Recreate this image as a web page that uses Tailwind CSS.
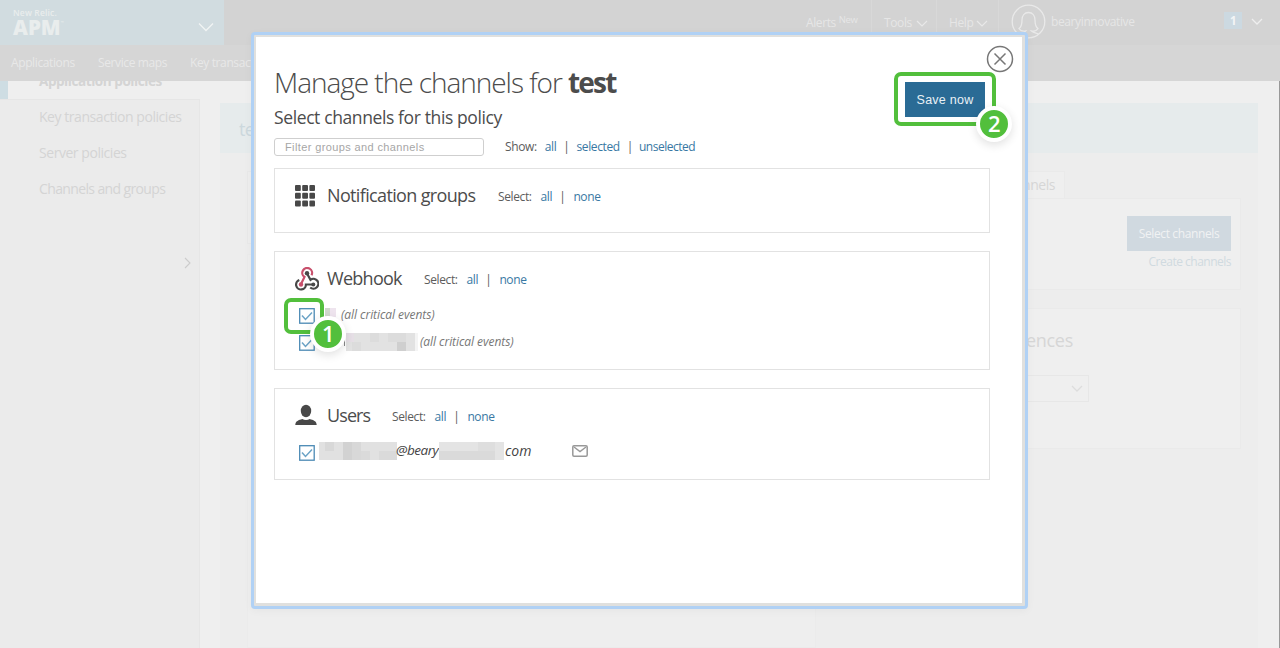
<!DOCTYPE html>
<html lang="en">
<head>
<meta charset="utf-8">
<title>Manage channels</title>
<script src="https://cdn.jsdelivr.net/npm/@tailwindcss/browser@4"></script>
</head>
<body class="overflow-hidden bg-[#efefef]">
<div class="relative flex h-[648px] w-[1280px] flex-col overflow-hidden bg-[#efefef] font-['Open_Sans',sans-serif] **:tracking-[-0.032em]">
  <!-- Top bar -->
  <header class="flex h-[45px] shrink-0 bg-[#d3d3d3] text-[#e6e6e6]">
    <div class="flex w-[224px] justify-between bg-[#d1dce0] pl-[13px] pr-[10px]">
      <div class="pt-[8px] text-[#e9eded]">
        <div class="text-[8.5px] leading-[10px] font-semibold tracking-[0.02em]!">New Relic.</div>
        <div class="flex text-[20.5px] leading-[19px] font-extrabold tracking-[0em]!">APM<span class="pt-[2px] text-[4px] leading-[5px] font-normal">™</span></div>
      </div>
      <svg class="mt-[22px] h-[10px] w-[16px]" viewBox="0 0 16 10" fill="none" stroke="#f1f4f4" stroke-width="1.3"><path d="M1 1.5l7 7 7-7"/></svg>
    </div>
    <div class="flex flex-1 text-[13px] leading-[18px]">
      <div class="ml-[582px] w-[65px] pt-[14px] text-[12px] whitespace-nowrap">Alerts <span class="relative -top-[4px] text-[9.500px]">New</span></div>
      <div class="flex w-[65px] gap-[4px] border-l border-[#d8d8d8] pl-[12px] pt-[14px] text-[12px]">Tools<svg class="mt-[6px] h-[8px] w-[12px]" viewBox="0 0 12 8" fill="none" stroke="#e8e8e8" stroke-width="1.2"><path d="M1 1l5 5 5-5"/></svg></div>
      <div class="flex w-[62px] gap-[3px] border-l border-[#d8d8d8] pl-[12px] pt-[14px] text-[12px]">Help<svg class="mt-[6px] h-[8px] w-[12px]" viewBox="0 0 12 8" fill="none" stroke="#e8e8e8" stroke-width="1.2"><path d="M1 1l5 5 5-5"/></svg></div>
      <div class="flex border-l border-[#d8d8d8] pl-[12px]">
        <svg class="mt-[4px] h-[36px] w-[36px]" viewBox="0 0 36 36" fill="none" stroke="#e9e9e9" stroke-width="1.3"><circle cx="17.5" cy="17.5" r="16.3"/><path d="M14 32c-2-1-1.500-3 .5-5-2.500.5-5 0-6.500-2.500 3-2 3-5 3-8.500 0-4.500 2.500-7.500 6.500-7.500s6.500 3 6.500 7.500c0 3.500 0 6.500 3 8.500-1.500 2.500-4 3-6.500 2.500 1.500 1.500 4 2 7 3"/></svg>
        <span class="ml-[4px] pt-[13px] text-[12px]">bearyinnovative</span>
      </div>
    </div>
    <div class="flex w-[56px] pt-[12px]">
      <div class="h-[17px] w-[18px] bg-[#ccd9e1] text-center text-[11.500px] leading-[18px] font-bold text-[#f3f5f6]">1</div>
      <svg class="mt-[6px] ml-[9px] h-[8px] w-[12px]" viewBox="0 0 12 8" fill="none" stroke="#eee" stroke-width="1.3"><path d="M1 1l5 5 5-5"/></svg>
    </div>
  </header>
  <nav class="flex h-[36px] shrink-0 bg-[#d6d6d6] pl-[11px] pt-[9px] text-[12px] leading-[18px] text-[#e8e8e8]">
    <span class="w-[87px]">Applications</span><span class="w-[92px]">Service maps</span><span>Key transactions</span>
  </nav>
  <!-- Page behind the dialog -->
  <div class="flex flex-1 overflow-hidden border-r border-[#999]">
    <aside class="flex w-[200px] flex-col text-[14px] leading-[18px] text-[#d4d4d4]">
      <div class="flex h-[18px] overflow-hidden"><div class="w-[8px] bg-[#cedde3]"></div><div class="-mt-[9px] pl-[31px] text-[13.500px] font-bold">Application policies</div></div>
      <div class="relative flex-1 border-t border-r border-[#e6e6e6] bg-[#ebebeb] pl-[39px] pt-[8px]">
        <div class="h-[36px]">Key transaction policies</div>
        <div class="h-[36px]">Server policies</div>
        <div class="h-[36px] tracking-[-0.045em]!">Channels and groups</div>
        <svg class="ml-[145px] mt-[41px] h-[12px] w-[7px]" viewBox="0 0 7 12" fill="none" stroke="#ccc" stroke-width="1.100"><path d="M1 1l5 5-5 5"/></svg>
      </div>
    </aside>
    <main class="mt-[22px] ml-[20px] flex w-[1038px] flex-col bg-[#ededed]">
      <div class="h-[50px] bg-[#e6ebec] pl-[19px] pt-[15px] text-[18px] leading-[22px] text-[#ccd8dd]">test</div>
      <div class="flex flex-1">
        <section class="mt-[18px] ml-[27px] flex w-[569px] flex-col">
          <div class="h-[73px] border border-[#e9e9e9] bg-[#eeeeee]"></div>
          <div class="mt-[10px] flex-1 border border-[#ebebeb] bg-[#eeeeee]"></div>
        </section>
        <section class="mt-[18px] w-[425px] text-right">
          <div class="-mb-px h-[28px] w-[249px] border border-b-0 border-[#eaeaea] bg-[#efefef] pr-[9px] text-[14px] leading-[26px] text-[#d6d6d6]">Channels</div>
          <div class="flex h-[92px] flex-col items-end border border-[#eaeaea] bg-[#efefef] pr-[9px] pt-[17px]">
            <div class="h-[35px] w-[104px] bg-[#d0d9e0] text-center text-[12px] leading-[35px] text-[#f0f2f3]">Select channels</div>
            <div class="pt-[2px] text-[12px] leading-[18px] tracking-[-0.042em]! text-[#d0dae0]">Create channels</div>
          </div>
          <div class="mt-[18px] h-[141px] border border-[#eaeaea] bg-[#efefef]">
            <div class="mt-[19px] w-[256px] text-[18px] leading-[24px] tracking-[-0.015em]! text-[#d6d6d6]">Preferences</div>
            <div class="mt-[23px] flex h-[27px] w-[272px] items-center justify-end border border-[#e7e7e7] pr-[5px]"><svg class="h-[8px] w-[12px]" viewBox="0 0 12 8" fill="none" stroke="#ddd" stroke-width="1.3"><path d="M1 1l5 5 5-5"/></svg></div>
          </div>
        </section>
      </div>
    </main>
  </div>

  <!-- Dialog -->
  <div class="absolute top-[31.500px] left-[250.500px] flex h-[577px] w-[777px] flex-col rounded-[4px] border-[3px] border-[#b0d1f5] bg-[#e0e0de] p-[2.500px] shadow-[0_2px_8px_rgba(0,0,0,0.04)]">
    <div class="relative flex flex-1 flex-col bg-white pl-[18px] text-[#4c4c4c]">
      <h1 class="mt-[26px] text-[28px] leading-[38px] font-light whitespace-nowrap tracking-[-0.037em]!">Manage the channels for <b class="font-bold tracking-[-0.065em]!">test</b></h1>
      <h2 class="mt-[4px] text-[17.500px] leading-[24px] tracking-[-0.022em]!">Select channels for this policy</h2>
      <div class="mt-[8px] flex h-[19px] items-center text-[12px]">
        <div class="h-[18px] w-[210px] rounded-[3px] border border-[#cfcfcf] pl-[10px] font-['Liberation_Sans',sans-serif] text-[11px] leading-[17px] tracking-[0.380px]! text-[#a6a6a6]">Filter groups and channels</div>
        <div class="mt-px ml-[21px] flex text-[#5c5c5c]"><span>Show:</span><span class="ml-[8px] text-[#3878a3]">all</span><span class="mx-[7px]">|</span><span class="text-[#3878a3]">selected</span><span class="mr-[6px] ml-[7px]">|</span><span class="tracking-[-0.042em]! text-[#3878a3]">unselected</span></div>
      </div>

      <section class="mt-[12px] h-[65px] w-[716px] border border-[#e2e2e2] pl-[20px] pt-[14px]">
        <div class="flex h-[24px] items-center text-[12px] text-[#5c5c5c]">
          <svg class="mt-px h-[23px] w-[20px]" viewBox="0 0 20 23" fill="#484848"><rect x="0" y="1" width="5.800" height="6" rx="1"/><rect x="7.200" y="1" width="5.800" height="6" rx="1"/><rect x="14.400" y="1" width="5.600" height="6" rx="1"/><rect x="0" y="8.800" width="5.800" height="6" rx="1"/><rect x="7.200" y="8.800" width="5.800" height="6" rx="1"/><rect x="14.400" y="8.800" width="5.600" height="6" rx="1"/><rect x="0" y="16.600" width="5.800" height="6" rx="1"/><rect x="7.200" y="16.600" width="5.800" height="6" rx="1"/><rect x="14.400" y="16.600" width="5.600" height="6" rx="1"/></svg>
          <span class="ml-[12px] w-[171px] text-[18px] tracking-[-0.036em]! text-[#4c4c4c]">Notification groups</span>
          <div class="flex pt-[3px]"><span>Select:</span><span class="ml-[9px] text-[#3878a3]">all</span><span class="mr-[8px] ml-[7px]">|</span><span class="text-[#3878a3]">none</span></div>
        </div>
      </section>

      <section class="mt-[18px] h-[119px] w-[716px] border border-[#e2e2e2] pl-[20px] pt-[14px]">
        <div class="flex h-[24px] items-center text-[12px] text-[#5c5c5c]">
          <svg class="mt-[2px] h-[24px] w-[24px]" viewBox="0 0 24 24" fill="none" stroke-width="2.200"><path stroke="#c8506c" d="M16.500 8.200A4.900 4.900 0 1 0 9.500 10L6.300 16.500"/><path stroke="#484848" d="M12 6.500l3.500 6.300a4.900 4.900 0 1 1-.3 7.700"/><path stroke="#484848" d="M4.300 13a4.900 4.900 0 1 0 6.600 4.500h7.500"/><circle cx="12" cy="6.300" r="2.200" fill="#484848"/><circle cx="6" cy="17.500" r="2.200" fill="#c8506c"/><circle cx="18.300" cy="17.500" r="2" fill="#484848"/></svg>
          <span class="ml-[8px] w-[97px] text-[18px] tracking-[-0.040em]! text-[#4c4c4c]">Webhook</span>
          <div class="flex pt-[3px]"><span>Select:</span><span class="ml-[9px] text-[#3878a3]">all</span><span class="mr-[8px] ml-[7px]">|</span><span class="text-[#3878a3]">none</span></div>
        </div>
        <div class="mt-[11px] flex h-[27px] items-center pl-[4px] text-[12px] text-[#777] italic">
          <svg class="mt-[3px] h-[16px] w-[16px]" viewBox="0 0 16 16" fill="none" stroke="#4a89b4"><rect x=".7" y=".7" width="14.500" height="14.500" stroke-width="1.300"/><path d="M3 7.500l3.500 4 6.500-7" stroke="#6ba3c6" stroke-width="1.500"/></svg>
          <svg class="-mt-[3px] ml-[9px] h-[13px] w-[14px]" viewBox="0 0 14 13"><path fill="#d0d8cd" d="M1 1h5v9H1z"/><path fill="#eee4ee" d="M6 1h6v9H6z"/></svg>
          <span class="ml-[3px] tracking-[-0.005em]!">(all critical events)</span>
        </div>
        <div class="flex h-[27px] items-center pl-[4px] text-[12px] text-[#777] italic">
          <svg class="mt-[3px] h-[16px] w-[16px]" viewBox="0 0 16 16" fill="none" stroke="#4a89b4"><rect x=".7" y=".7" width="14.500" height="14.500" stroke-width="1.300"/><path d="M3 7.500l3.500 4 6.500-7" stroke="#6ba3c6" stroke-width="1.500"/></svg>
          <svg class="ml-[29px] h-[18px] w-[74px]" viewBox="0 0 74 18"><path stroke="#888" d="M.5 6v7"/><path fill="#e2e2e2" d="M2 0h69v18H2z"/><path fill="#e6dfe6" d="M2 0h8v9H2z"/><path fill="#dcdcdc" d="M8 9h9v9H8zM26 0h9v9h-9zM44 0h9v9h-9z"/><path fill="#dcdcdc" d="M53 0h9v9h-9z"/><path fill="#cfcfcf" d="M53 9h9v9h-9z"/><path fill="#f4f4f4" d="M71 0h3v18h-3z"/></svg>
          <span class="ml-[2px] tracking-[-0.005em]!">(all critical events)</span>
        </div>
      </section>

      <section class="mt-[18px] h-[92px] w-[716px] border border-[#e2e2e2] pl-[20px] pt-[14px]">
        <div class="flex h-[24px] items-center text-[12px] text-[#5c5c5c]">
          <svg class="h-[22px] w-[22px]" viewBox="0 0 22 22" fill="#484848"><ellipse cx="11" cy="7" rx="5.200" ry="6.200"/><path d="M.3 21c0-4 3.500-5 7-6 2 1.200 5.400 1.200 7.400 0 3.500 1 7 2 7 6z"/></svg>
          <span class="ml-[10px] w-[65px] text-[18px] tracking-[-0.050em]! text-[#4c4c4c]">Users</span>
          <div class="flex pt-[3px]"><span>Select:</span><span class="ml-[9px] text-[#3878a3]">all</span><span class="mr-[8px] ml-[7px]">|</span><span class="text-[#3878a3]">none</span></div>
        </div>
        <div class="mt-[10px] flex h-[27px] items-center pl-[4px] text-[14px] text-[#444] italic">
          <svg class="mt-[5px] h-[16px] w-[16px]" viewBox="0 0 16 16" fill="none" stroke="#4a89b4"><rect x=".7" y=".7" width="14.500" height="14.500" stroke-width="1.300"/><path d="M3 7.500l3.500 4 6.500-7" stroke="#6ba3c6" stroke-width="1.500"/></svg>
          <svg class="ml-[4px] h-[18px] w-[78px]" viewBox="0 0 78 18"><path fill="#e1e1e1" d="M0 0h78v18H0z"/><path fill="#d8d8d8" d="M6 0h9v9H6zM33 0h9v18h-9z"/><path fill="#d2d2d2" d="M24 0h9v18h-9z"/><path fill="#dadada" d="M42 9h9v9h-9zM60 9h18v9H60z"/></svg>
          <span class="-ml-px w-[43px] text-[13.500px] tracking-[-0.035em]!">@beary</span>
          <svg class="h-[18px] w-[65px]" viewBox="0 0 65 18"><path fill="#e4e4e4" d="M0 0h65v18H0z"/><path fill="#dadada" d="M0 9h56v9H0z"/><path fill="#dedede" d="M39 0h17v9H39z"/></svg>
          <span class="ml-[1px] w-[67px] tracking-[0em]!">com</span>
          <svg class="h-[12px] w-[16px]" viewBox="0 0 16 12" fill="none" stroke="#999" stroke-width="1.500"><rect x=".8" y=".8" width="14.400" height="10.400" rx="1.200"/><path d="M2 2l6 4.500L14 2"/></svg>
        </div>
      </section>

      <svg class="absolute top-[8px] left-[730px] h-[28px] w-[28px]" viewBox="0 0 28 28" fill="none" stroke="#777" stroke-width="1.500"><circle cx="14" cy="14" r="12.500"/><path d="M8.500 8.500l11 11M19.500 8.500l-11 11"/></svg>
      <div class="absolute top-[35px] left-[638px] h-[54px] w-[102px] rounded-[7px] border-4 border-[#52bf3c] pt-[6px] pl-[7px]">
        <div class="h-[35px] w-[80px] bg-[#2a6b95] text-center font-['Liberation_Sans',sans-serif] text-[12.500px] leading-[36px] tracking-[0.250px]! text-[#e9f1f6]">Save now</div>
      </div>
      <div class="absolute top-[69px] left-[720px] h-[36px] w-[36px] rounded-full border-4 border-white bg-[#52bf3c] text-center text-[22px] leading-[27px] font-semibold text-white shadow-[0_3px_10px_rgba(0,0,0,0.12)]">2</div>
      <div class="absolute top-[261px] left-[28px] h-[36px] w-[40px] rounded-[7px] border-4 border-[#52bf3c]"></div>
      <div class="absolute top-[279px] left-[54px] h-[36px] w-[36px] rounded-full border-4 border-white bg-[#52bf3c] text-center text-[22px] leading-[27px] font-semibold text-white shadow-[0_3px_10px_rgba(0,0,0,0.12)]">1</div>
    </div>
  </div>
</div>
</body>
</html>
